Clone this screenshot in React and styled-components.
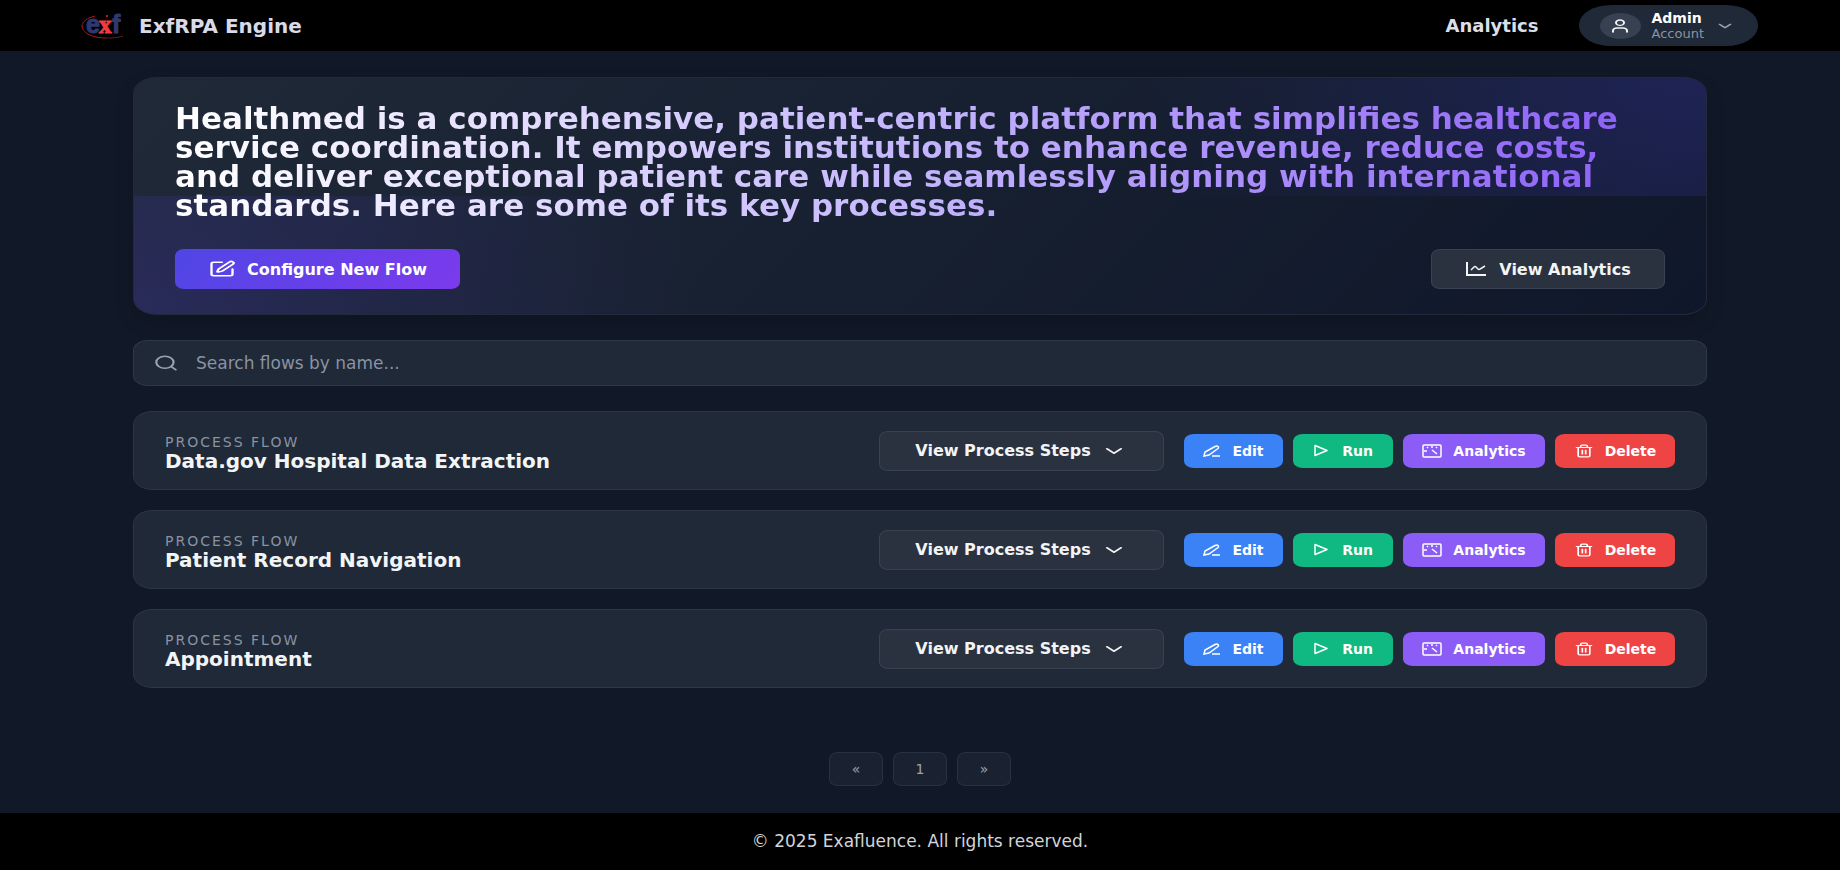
import React from "react"
import styled, { createGlobalStyle, css } from "styled-components"
import { ChevronDown, Search, SquarePen, Trash2, User } from "lucide-react"

const GlobalStyle = createGlobalStyle`
  * {
    box-sizing: border-box;
  }

  body {
    margin: 0;
    background: #111827;
    color: #f3f4f6;
    font-family: "DejaVu Sans", Verdana, sans-serif;
    font-size: 16px;
  }

  button,
  input {
    font-family: inherit;
  }

  svg {
    flex-shrink: 0;
  }
`

const Page = styled.div`
  display: flex;
  flex-direction: column;
  min-height: 100vh;
`

const Header = styled.header`
  display: flex;
  align-items: center;
  justify-content: space-between;
  padding: 5px 82px 5px 80px;
  background: #000;
`

const Brand = styled.a`
  display: flex;
  align-items: center;
  gap: 14px;
  color: #d9dae8;
  font-size: 20px;
  font-weight: 700;
  text-decoration: none;
`

const Nav = styled.nav`
  display: flex;
  align-items: center;
  gap: 40px;
`

const NavLink = styled.a`
  color: #dcdfe6;
  font-size: 18px;
  font-weight: 700;
  text-decoration: none;
`

const UserMenu = styled.button`
  display: flex;
  align-items: center;
  padding: 5px 22px 5px 21px;
  border: none;
  border-radius: 32px / 20px;
  background: #1f2937;
  color: #9ca3af;
  cursor: pointer;
`

const Avatar = styled.span`
  display: flex;
  align-items: center;
  justify-content: center;
  width: 41px;
  height: 26px;
  margin-right: 11px;
  border-radius: 50%;
  background: #374151;
  color: #f3f4f6;
`

const UserText = styled.span`
  display: flex;
  flex-direction: column;
  margin-right: 10px;
  text-align: left;
`

const UserName = styled.span`
  color: #fff;
  font-size: 14px;
  font-weight: 700;
  line-height: 16px;
`

const UserRole = styled.span`
  color: #8b93a5;
  font-size: 13px;
  line-height: 15px;
`

const Main = styled.main`
  flex: 1;
  padding: 26px 133px;
`

const Hero = styled.section`
  padding: 26px 41px 25px;
  border: 1px solid #1f2b3b;
  border-radius: 24px / 16px;
  background:
    radial-gradient(ellipse 565px 377px at top right, rgba(79, 70, 229, 0.22), transparent)
      top right / 50% 50% no-repeat,
    radial-gradient(ellipse 565px 377px at bottom left, rgba(90, 60, 235, 0.2), transparent)
      bottom left / 50% 50% no-repeat,
    linear-gradient(135deg, #1f2937, #0f172a);
  box-shadow: 0 8px 20px rgba(0, 0, 0, 0.14);
`

const HeroTitle = styled.h1`
  margin: 0 0 25px;
  padding: 0 40px 4px 0;
  background: linear-gradient(90deg, #fff 0%, #c4b5fd 50%, #8b5cf6 100%);
  background-clip: text;
  color: transparent;
  font-size: 31px;
  font-weight: 700;
  line-height: 29px;
`

const HeroActions = styled.div`
  display: flex;
  justify-content: space-between;
`

const heroButton = css`
  display: flex;
  align-items: center;
  justify-content: center;
  height: 40px;
  border-radius: 9px / 7px;
  color: #fff;
  font-size: 16px;
  font-weight: 700;
  cursor: pointer;
`

const ConfigureButton = styled.button`
  ${heroButton}
  gap: 11px;
  min-width: 285px;
  border: none;
  background: linear-gradient(135deg, #4f46e5, #7c3aed);
`

const OutlineButton = styled.button`
  ${heroButton}
  gap: ${props => props.$gap}px;
  min-width: ${props => props.$width}px;
  border: 1px solid #384250;
  background: #2a3240;
  color: #f3f4f6;
`

const SearchBar = styled.label`
  display: flex;
  align-items: center;
  gap: 17px;
  height: 46px;
  margin: 25px 0;
  padding: 0 19px;
  border: 1px solid #2d3848;
  border-radius: 15px / 10px;
  background: #1f2937;
  color: #9ca3af;
`

const SearchInput = styled.input`
  flex: 1;
  padding: 0;
  border: none;
  outline: none;
  background: transparent;
  color: #f3f4f6;
  font-size: 17px;

  &::placeholder {
    color: #8a92a3;
    opacity: 1;
  }
`

const FlowList = styled.ul`
  display: flex;
  flex-direction: column;
  gap: 20px;
  margin: 0;
  padding: 0;
  list-style: none;
`

const FlowCard = styled.li`
  display: flex;
  align-items: center;
  min-height: 79px;
  padding: 0 31px;
  border: 1px solid #2b3646;
  border-radius: 20px / 14px;
  background: #1f2937;
`

const FlowInfo = styled.div`
  flex: 1;
  padding-top: 4px;
`

const FlowLabel = styled.div`
  color: #8a92a3;
  font-size: 14px;
  letter-spacing: 2px;
  line-height: 16px;
  text-transform: uppercase;
`

const FlowName = styled.h2`
  margin: 0;
  font-size: 20px;
  font-weight: 700;
  line-height: 22px;
`

const FlowActions = styled.div`
  display: flex;
  gap: 10px;
  margin-left: 20px;
`

const ActionButton = styled.button`
  display: flex;
  align-items: center;
  justify-content: center;
  gap: 11px;
  width: ${props => props.$width}px;
  height: 34px;
  padding: 0;
  border: none;
  border-radius: 10px / 7px;
  background: ${props => props.$color};
  color: #fff;
  font-size: 14px;
  font-weight: 700;
  cursor: pointer;
`

const Pagination = styled.nav`
  display: flex;
  justify-content: center;
  gap: 10px;
  margin-top: 64px;
`

const PageButton = styled.button`
  width: 54px;
  height: 34px;
  border: 1px solid #273242;
  border-radius: 9px / 7px;
  background: #1a2231;
  color: #9ca3af;
  font-size: 14px;
`

const Footer = styled.footer`
  padding: 18px;
  background: #000;
  color: #d1d5db;
  font-size: 17px;
  line-height: 21px;
  text-align: center;
`

const LogoText = styled.text`
  font-family: ${props => (props.$serif ? "Liberation Serif" : "Liberation Sans")}, sans-serif;
  font-size: 25px;
  font-weight: 700;
`

const Logo = () => (
  <svg width="45" height="30" viewBox="0 0 45 30" aria-hidden="true">
    <LogoText x="6" y="22" fill="#2d3970" stroke="#2d3970">e</LogoText>
    <LogoText x="32" y="22" fill="#2d3970" stroke="#2d3970">f</LogoText>
    <LogoText x="19" y="22" fill="#f43b3b" stroke="#f43b3b" $serif>x</LogoText>
    <circle cx="27" cy="5" r="1" fill="#d92c2c" />
    <path d="M15 5C7 7 2 11 2 15c0 6 9 12 24 12" fill="none" stroke="#b01818" />
    <path d="M26 27c6 0 11 0 17-2" fill="none" stroke="#5c2222" />
  </svg>
)

const ChartLineIcon = () => (
  <svg width="22" height="16" viewBox="0 0 22 16" fill="none" stroke="currentColor" aria-hidden="true">
    <path d="M2 1v13h19" strokeWidth="2" />
    <path d="M6 9l3-3q1-1 2 0l2 2q1 1 2 0l5-3" strokeWidth="1.5" />
  </svg>
)

const PencilIcon = () => (
  <svg width="18" height="12" viewBox="0 0 18 12" fill="none" stroke="currentColor" strokeWidth="1.5" aria-hidden="true">
    <path d="M1 11l1-4L12 1.500q2-1 3 0t0 2L6 10zM9 11h8" />
  </svg>
)

const PlayIcon = () => (
  <svg width="18" height="13" viewBox="0 0 18 13" fill="none" stroke="currentColor" strokeWidth="1.5" aria-hidden="true">
    <path d="M2 1.500v10l12-5z" strokeLinejoin="round" />
  </svg>
)

const AnalyticsIcon = () => (
  <svg width="20" height="14" viewBox="0 0 20 14" fill="none" stroke="currentColor" strokeWidth="1.5" aria-hidden="true">
    <rect x="1" y="1" width="18" height="12" rx="1" />
    <path d="M10 6l5 4M10 2v2M2 7h3M5 3l1 1M15 3l-1 1" />
  </svg>
)

const flows = ["Data.gov Hospital Data Extraction", "Patient Record Navigation", "Appointment"]

const Flow = ({ name }) => (
  <FlowCard>
    <FlowInfo>
      <FlowLabel>Process Flow</FlowLabel>
      <FlowName>{name}</FlowName>
    </FlowInfo>
    <OutlineButton type="button" $width={285} $gap={9}>
      View Process Steps
      <ChevronDown width={28} height={18} preserveAspectRatio="none" />
    </OutlineButton>
    <FlowActions>
      <ActionButton type="button" $color="#3b82f6" $width={99}>
        <PencilIcon />
        Edit
      </ActionButton>
      <ActionButton type="button" $color="#10b981" $width={100}>
        <PlayIcon />
        Run
      </ActionButton>
      <ActionButton type="button" $color="#8b5cf6" $width={142}>
        <AnalyticsIcon />
        Analytics
      </ActionButton>
      <ActionButton type="button" $color="#ef4444" $width={120}>
        <Trash2 width={20} height={14} preserveAspectRatio="none" />
        Delete
      </ActionButton>
    </FlowActions>
  </FlowCard>
)

const App = () => {
  return (
    <Page>
      <GlobalStyle />
      <Header>
        <Brand href="#">
          <Logo />
          ExfRPA Engine
        </Brand>
        <Nav>
          <NavLink href="#analytics">Analytics</NavLink>
          <UserMenu type="button">
            <Avatar>
              <User width={24} height={16} preserveAspectRatio="none" />
            </Avatar>
            <UserText>
              <UserName>Admin</UserName>
              <UserRole>Account</UserRole>
            </UserText>
            <ChevronDown width={22} height={14} preserveAspectRatio="none" />
          </UserMenu>
        </Nav>
      </Header>
      <Main>
        <Hero>
          <HeroTitle>
            Healthmed is a comprehensive, patient-centric platform that simplifies healthcare service
            coordination. It empowers institutions to enhance revenue, reduce costs, and deliver
            exceptional patient care while seamlessly aligning with international standards. Here are
            some of its key processes.
          </HeroTitle>
          <HeroActions>
            <ConfigureButton type="button">
              <SquarePen width={28} height={18} preserveAspectRatio="none" />
              Configure New Flow
            </ConfigureButton>
            <OutlineButton type="button" $width={234} $gap={12}>
              <ChartLineIcon />
              View Analytics
            </OutlineButton>
          </HeroActions>
        </Hero>
        <SearchBar>
          <Search width={26} height={18} preserveAspectRatio="none" />
          <SearchInput type="text" aria-label="Search flows" placeholder="Search flows by name..." />
        </SearchBar>
        <FlowList>
          {flows.map(name => (
            <Flow key={name} name={name} />
          ))}
        </FlowList>
        <Pagination aria-label="Pages">
          <PageButton type="button">«</PageButton>
          <PageButton type="button">1</PageButton>
          <PageButton type="button">»</PageButton>
        </Pagination>
      </Main>
      <Footer>© 2025 Exafluence. All rights reserved.</Footer>
    </Page>
  )
}

export default App
